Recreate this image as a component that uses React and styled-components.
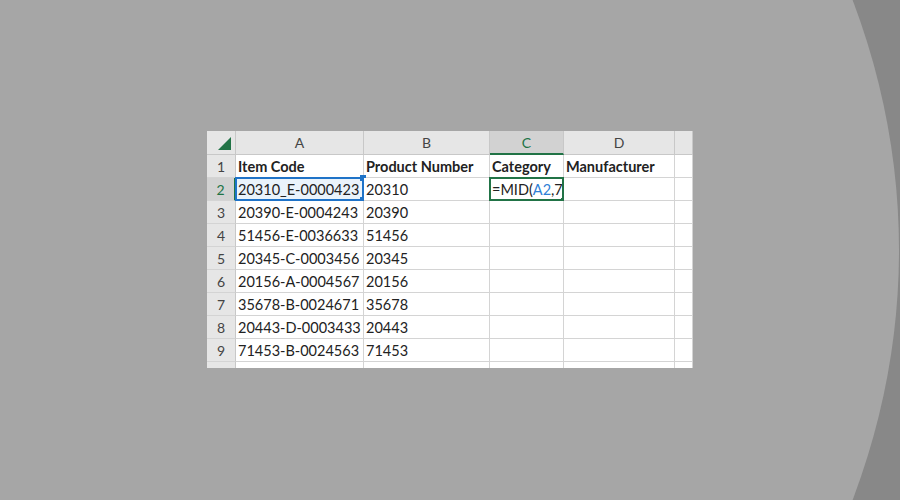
import React from "react";
import styled, { createGlobalStyle } from "styled-components";

const G = createGlobalStyle`
  html,body{margin:0;padding:0;}
  body{width:900px;height:500px;overflow:hidden;background:#a6a6a6;font-family:Lato,"Noto Sans",sans-serif;}
`;
const Page = styled.div`
  position:relative;width:900px;height:500px;overflow:hidden;background:#a6a6a6;
  display:flex;align-items:flex-start;justify-content:flex-start;
  padding:131px 0 0 207px;box-sizing:border-box;
`;
const Curve = styled.div`
  position:absolute;left:-1200px;top:-600px;width:2099px;height:1700px;border-radius:50%;
  box-shadow:0 0 0 800px #888888;pointer-events:none;
`;
const Sheet = styled.div`
  position:relative;z-index:1;width:486px;height:237px;overflow:hidden;background:#fff;
  display:grid;grid-template-columns:29px 128px 126px 74px 111px 18px;
  grid-template-rows:24px repeat(9,23px) 10px;
`;
const Corner = styled.div`
  background:#e6e6e6;border-right:1px solid #c8c8c8;border-bottom:1px solid #c8c8c8;position:relative;
  &::after{content:"";position:absolute;right:4px;bottom:4px;border-left:13px solid transparent;border-bottom:13px solid #217346;}
`;
const ColHead = styled.div`
  background:${p=>p.$sel?"#d2d2d2":"#e6e6e6"};color:${p=>p.$sel?"#217346":"#444"};
  border-right:1px solid #c8c8c8;border-bottom:${p=>p.$sel?"2px solid #217346":"1px solid #c8c8c8"};
  display:flex;align-items:center;justify-content:center;font-size:14px;box-sizing:border-box;
`;
const RowHead = styled.div`
  background:${p=>p.$sel?"#d2d2d2":"#e6e6e6"};color:${p=>p.$sel?"#217346":"#444"};
  border-right:${p=>p.$sel?"2px solid #217346":"1px solid #c8c8c8"};border-bottom:1px solid #d4d4d4;
  display:flex;align-items:center;justify-content:center;font-size:14px;box-sizing:border-box;
`;
const Cell = styled.div`
  border-right:1px solid #d4d4d4;border-bottom:1px solid #d4d4d4;box-sizing:border-box;
  display:flex;align-items:center;padding-left:2px;font-size:14.5px;color:#222;white-space:nowrap;
  font-weight:${p=>p.$bold?700:400};position:relative;overflow:visible;
  background:${p=>p.$tint?"#eaf3fb":"#fff"};
`;
const BlueSel = styled.div`
  position:absolute;left:-1px;top:-1px;right:-1px;bottom:-1px;border:2px solid #1f73c8;pointer-events:none;
  &::before,&::after{content:"";position:absolute;width:6px;height:6px;background:#1f73c8;right:-4px;}
  &::before{top:-4px;} &::after{bottom:-4px;}
`;
const GreenSel = styled.div`
  position:absolute;left:-1px;top:-1px;right:-1px;bottom:-1px;border:2px solid #217346;pointer-events:none;
  &::after{content:"";position:absolute;width:5px;height:5px;background:#217346;right:-4px;bottom:-4px;}
`;
const Ref = styled.span`color:#2f7fd6;`;
const Caret = styled.span`display:inline-block;width:1px;height:18px;background:#222;margin-left:1px;`;

const rows = [
  ["20310_E-0000423","20310"],["20390-E-0004243","20390"],["51456-E-0036633","51456"],
  ["20345-C-0003456","20345"],["20156-A-0004567","20156"],["35678-B-0024671","35678"],
  ["20443-D-0003433","20443"],["71453-B-0024563","71453"],
];

export default function App(){
  return (<Page><G/><Curve/>
    <Sheet>
      <Corner/>
      <ColHead>A</ColHead><ColHead>B</ColHead><ColHead $sel>C</ColHead><ColHead>D</ColHead><ColHead/>
      <RowHead>1</RowHead>
      <Cell $bold>Item Code</Cell><Cell $bold>Product Number</Cell><Cell $bold>Category</Cell><Cell $bold>Manufacturer</Cell><Cell/>
      {rows.map((r,i)=>(
        <React.Fragment key={i}>
          <RowHead $sel={i===0}>{i+2}</RowHead>
          <Cell $tint={i===0}>{r[0]}{i===0&&<BlueSel/>}</Cell>
          <Cell>{r[1]}</Cell>
          <Cell>{i===0&&<>=MID(<Ref>A2</Ref>,7,1)<Caret/><GreenSel/></>}</Cell>
          <Cell/><Cell/>
        </React.Fragment>
      ))}
      <RowHead/><Cell/><Cell/><Cell/><Cell/><Cell/>
    </Sheet>
  </Page>);
}
